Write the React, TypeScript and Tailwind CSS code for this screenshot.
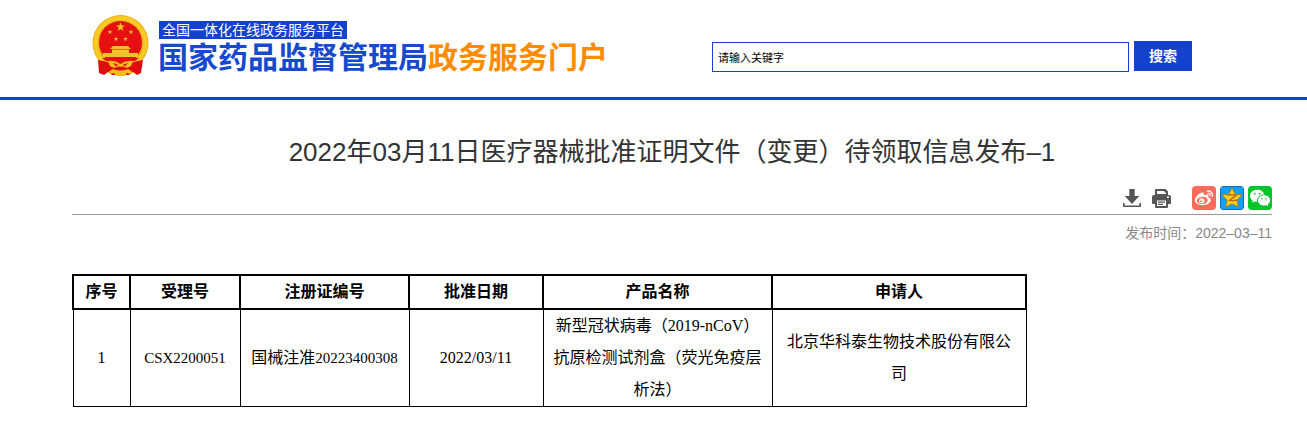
import { RiWechatFill, RiWeiboFill } from "react-icons/ri";

const COLUMNS = [
  { title: "序号", width: "w-[57px]" },
  { title: "受理号", width: "w-[110px]" },
  { title: "注册证编号", width: "w-[169px]" },
  { title: "批准日期", width: "w-[134px]" },
  { title: "产品名称", width: "w-[229px]" },
  { title: "申请人", width: "w-[254px]" },
];

const STAR = "M0 -10 L2.4 -3.2 L9.5 -3.1 L3.8 1.2 L5.9 8.1 L0 4 L-5.9 8.1 L-3.8 1.2 L-9.5 -3.1 L-2.4 -3.2 Z";
const WIDE_STAR = "M0 -10 L3.2 -3.8 L10 -3 L5 2 L6.3 9 L0 5.8 L-6.3 9 L-5 2 L-10 -3 L-3.2 -3.8 Z";

function Emblem() {
  return (
    <svg viewBox="0 0 57 61" className="h-[61px] w-[57px] shrink-0" aria-label="国徽" role="img">
      <circle cx="28.5" cy="28" r="28" fill="#eeb111" />
      <circle cx="28.5" cy="28" r="25" fill="none" stroke="#f8ca28" strokeWidth="4" />
      <circle cx="28.5" cy="27.5" r="21.5" fill="#e60f12" />
      <g fill="#f0c52a">
        <path d={STAR} transform="translate(28.5 12) scale(.48)" />
        <path d={STAR} transform="translate(18 17) scale(.26)" />
        <path d={STAR} transform="translate(39 17) scale(.26)" />
        <path d={STAR} transform="translate(24 24) scale(.26)" />
        <path d={STAR} transform="translate(33.5 24) scale(.26)" />
        <path d="M21 31 H36 L39 34 H18 Z" />
        <path d="M20 34.5 H37 V38 H46 V42 H11 V38 H20 Z" />
      </g>
      <path d="M20 34.300 H37" stroke="#d98a10" strokeWidth=".6" />
      <path d="M10 43 H47 L43 46 H14 Z" fill="#e60f12" />
      <path d="M6 45 Q13 46 18 48 L28.500 52 L39 48 Q44 46 51 45 L49 58 L45 60 L41 57 L37 60 H20 L16 57 L12 60 L7 58 Z" fill="#e00d10" />
      <path d="M16 46 Q23 45 28.500 49 Q34 45 41 46 L39 51 Q35 54 32 52 L28.500 50 L25 52 Q22 54 18 51 Z" fill="#f5bd1a" />
      <path d="M21 48 L26 49.500 L24 51.500 Z M36 48 L31 49.500 L33 51.500 Z" fill="#e00d10" />
      <path d="M15 58 L21 54 Q28.500 57 36 54 L42 58 L38 59 L35 58 L33 61 H24 L22 58 L19 59 Z" fill="#f5bd1a" />
    </svg>
  );
}

function DownloadIcon() {
  return (
    <svg viewBox="0 0 18 18" className="h-[18px] w-[18px]" fill="#555">
      <path d="M6.300 0 H11.700 V7 H16.300 L9 15 L1.700 7 H6.300 Z" />
      <path d="M0 14 H1.600 V16.500 H16.400 V14 H18 V18 H0 Z" />
    </svg>
  );
}

function PrintIcon() {
  return (
    <svg viewBox="0 0 19 19" className="h-[19px] w-[19px]" fill="#555">
      <path fillRule="evenodd" d="M4 0 H13.500 L16 2.500 V6 H3 V1 Q3 0 4 0 Z M5 2 V5 H14 V3.500 H12.500 V2 Z" />
      <path
        fillRule="evenodd"
        d="M2 6 H17 Q19 6 19 8 V14 Q19 15 18 15 H16 V11 H3 V15 H1 Q0 15 0 14 V8 Q0 6 2 6 Z M15 7.500 V9 H17 V7.500 Z"
      />
      <path fillRule="evenodd" d="M3 10 H16 V18 Q16 19 15 19 H4 Q3 19 3 18 Z M5 11.500 V17 H14 V11.500 Z" />
      <path d="M6 12.500 H13 V13.700 H6 Z M6 14.800 H11 V16 H6 Z" />
    </svg>
  );
}

function QzoneIcon() {
  return (
    <svg viewBox="0 0 24 24" className="h-6 w-6 rounded-sm">
      <rect x=".5" y=".5" width="23" height="23" rx="1.5" fill="#10a0fa" stroke="#1768b5" />
      <path d={WIDE_STAR} transform="translate(12 12)" fill="#ffcf1c" stroke="#a8801e" strokeWidth="1" strokeLinejoin="round" />
      <path d="M7.500 9.300 Q12 8.300 16 9.300 L9.500 14.300 Q13 15.300 17 14" fill="none" stroke="#bd6b0c" strokeWidth="1.600" />
    </svg>
  );
}

function Header() {
  return (
    <header className="flex items-start justify-between border-b-[3px] border-[#1442cc] pr-[115px] pl-[92px]">
      <a href="#" className="flex h-[97px] items-start gap-[9px] pt-[15px]">
        <Emblem />
        <div className="flex flex-col items-start pt-[6px]">
          <span className="ml-px bg-[#1442cc] px-[3px] text-[14px] leading-[18px] whitespace-nowrap text-white">
            全国一体化在线政务服务平台
          </span>
          <span className="text-[30px] leading-[38px] font-bold whitespace-nowrap text-[#1649cd]">
            国家药品监督管理局<span className="text-[#ff8c00]">政务服务门户</span>
          </span>
        </div>
      </a>

      <form className="flex w-[480px] items-start gap-[5px] pt-[41px]">
        <input
          type="text"
          aria-label="请输入关键字"
          defaultValue="请输入关键字"
          className="mt-px h-[30px] min-w-0 flex-1 border border-[#1442cc] px-[5px] text-[11px] text-black outline-none"
        />
        <button type="button" className="h-[30px] w-[58px] bg-[#1442cc] text-[14px] font-bold text-white">
          搜索
        </button>
      </form>
    </header>
  );
}

function Toolbar() {
  return (
    <div className="mt-[14px] flex items-center justify-end border-b border-[#999] pb-1">
      <button type="button" aria-label="下载">
        <DownloadIcon />
      </button>
      <button type="button" aria-label="打印" className="mr-[21px] ml-[11px]">
        <PrintIcon />
      </button>
      <div className="flex gap-1">
        <a href="#" aria-label="微博" className="flex h-6 w-6 items-center justify-center rounded-sm bg-[#ff6b5a]">
          <RiWeiboFill className="h-5 w-5 text-white" />
        </a>
        <a href="#" aria-label="QQ空间">
          <QzoneIcon />
        </a>
        <a href="#" aria-label="微信" className="flex h-6 w-6 items-center justify-center rounded-sm bg-[#00c52b]">
          <RiWechatFill className="h-[22px] w-[22px] text-white" />
        </a>
      </div>
    </div>
  );
}

function ApprovalTable() {
  return (
    <table className="mt-[31px] w-[955px] max-w-full table-fixed border-collapse text-center font-['Liberation_Serif','Noto_Sans_CJK_SC',serif] text-[16px] leading-8 text-black">
      <thead>
        <tr>
          {COLUMNS.map(column => (
            <th key={column.title} className={`${column.width} border-2 border-black font-bold`}>
              {column.title}
            </th>
          ))}
        </tr>
      </thead>
      <tbody>
        <tr>
          <td className="border border-black">1</td>
          <td className="border border-black text-[15px]">CSX2200051</td>
          <td className="border border-black">
            国械注准<span className="text-[15px]">20223400308</span>
          </td>
          <td className="border border-black">2022/03/11</td>
          <td className="border border-black px-2">新型冠状病毒（2019-nCoV）抗原检测试剂盒（荧光免疫层析法）</td>
          <td className="border border-black px-2">北京华科泰生物技术股份有限公司</td>
        </tr>
      </tbody>
    </table>
  );
}

export default function App() {
  return (
    <div lang="zh-CN" className="bg-white font-['Liberation_Sans','Noto_Sans_CJK_SC',sans-serif]">
      <Header />
      <main className="pr-[35px] pb-7 pl-[72px]">
        <h1 className="pt-8 text-center text-[26px] leading-10 text-[#333]">
          2022年03月11日医疗器械批准证明文件（变更）待领取信息发布–1
        </h1>
        <Toolbar />
        <p className="mt-2 text-right text-[14px] leading-5 text-[#888]">发布时间：2022–03–11</p>
        <ApprovalTable />
      </main>
    </div>
  );
}
